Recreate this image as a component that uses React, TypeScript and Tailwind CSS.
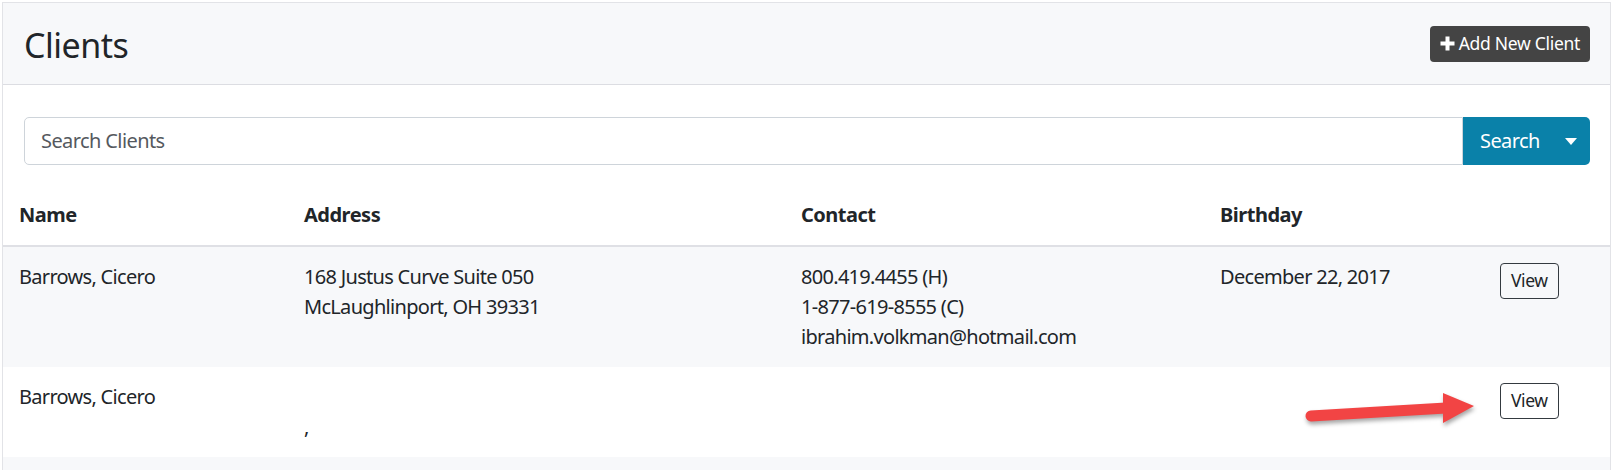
import React from "react";

type Client = {
  name: string;
  address: string[];
  contact: string[];
  birthday: string;
};

const clients: Client[] = [
  {
    name: "Barrows, Cicero",
    address: ["168 Justus Curve Suite 050", "McLaughlinport, OH 39331"],
    contact: ["800.419.4455 (H)", "1-877-619-8555 (C)", "ibrahim.volkman@hotmail.com"],
    birthday: "December 22, 2017",
  },
  {
    name: "Barrows, Cicero",
    address: ["", ","],
    contact: [],
    birthday: "",
  },
];

function PlusIcon() {
  return (
    <svg width="15" height="15" viewBox="0 0 15 15" className="shrink-0">
      <path d="M5.5 0.5h4v5h5v4h-5v5h-4v-5h-5v-4h5z" fill="#ffffff" />
    </svg>
  );
}

function Arrow() {
  return (
    <svg
      width="190"
      height="56"
      viewBox="0 0 190 56"
      className="absolute left-[1300px] top-[385px] pointer-events-none"
      style={{ filter: "drop-shadow(1px 3px 2px rgba(0,0,0,0.35))" }}
    >
      <line x1="11" y1="31" x2="146" y2="23" stroke="#f24444" strokeWidth="11" strokeLinecap="round" />
      <polygon points="143,8 174,21 143,38" fill="#f24444" />
    </svg>
  );
}

export default function App() {
  return (
    <div
      className="relative w-[1614px] h-[470px] overflow-hidden bg-white pl-[2px] pt-[2px] pr-[3px] text-[#212529]"
      style={{ fontFamily: "'Noto Sans', 'Open Sans', sans-serif" }}
    >
      <div className="border border-[#e2e3e7] bg-white h-[480px]">
        {/* Card header */}
        <div className="h-[82px] bg-[#f7f8fa] border-b border-[#dcdde2] flex items-center justify-between pl-[21px] pr-[20px]">
          <h2 className="text-[34px] leading-none font-normal tracking-[-0.5px] pt-[2px]">Clients</h2>
          <button className="h-[36px] px-[10px] rounded-[4px] bg-[#444444] text-white text-[17.5px] flex items-center gap-[4px]">
            <PlusIcon />
            <span className="tracking-[-0.3px]">Add New Client</span>
          </button>
        </div>

        {/* Search */}
        <div className="pt-[32px] pl-[21px] pr-[20px]">
          <div className="flex h-[48px]">
            <input
              className="flex-1 border border-[#ced4da] rounded-l-[5px] px-[16px] text-[20px] outline-none placeholder:text-[#55595e] tracking-[-0.6px]"
              placeholder="Search Clients"
            />
            <button className="w-[127px] bg-[#0a81a9] text-white rounded-r-[5px] flex items-center pl-[17px] pr-[13px] justify-between">
              <span className="text-[20px] tracking-[-0.6px]">Search</span>
              <svg width="12" height="7" viewBox="0 0 12 7">
                <path d="M0 0h12L6 7z" fill="#ffffff" />
              </svg>
            </button>
          </div>
        </div>

        {/* Table */}
        <table className="mt-[20px] w-full table-fixed border-collapse text-[20px] leading-[30px] tracking-[-0.7px]">
          <colgroup>
            <col className="w-[285px]" />
            <col className="w-[497px]" />
            <col className="w-[419px]" />
            <col className="w-[281px]" />
            <col />
          </colgroup>
          <thead>
            <tr className="border-b-2 border-[#dfe0e5]">
              <th className="text-left font-bold px-[16px] py-[15px] tracking-[-0.5px]">Name</th>
              <th className="text-left font-bold px-[16px] py-[15px] tracking-[-0.5px]">Address</th>
              <th className="text-left font-bold px-[16px] py-[15px] tracking-[-0.5px]">Contact</th>
              <th className="text-left font-bold px-[16px] py-[15px] tracking-[-0.5px]">Birthday</th>
              <th className="px-[16px] py-[15px]"></th>
            </tr>
          </thead>
          <tbody>
            {clients.map((c, i) => (
              <tr key={i} className={i % 2 === 0 ? "bg-[#f7f8fa]" : "bg-white"}>
                <td className="align-top px-[16px] py-[15px]">{c.name}</td>
                <td className="align-top px-[16px] py-[15px]">
                  {c.address.map((l, j) => (
                    <div key={j} className="h-[30px]">{l}</div>
                  ))}
                </td>
                <td className="align-top px-[16px] py-[15px]">
                  {c.contact.map((l, j) => (
                    <div key={j}>{l}</div>
                  ))}
                </td>
                <td className="align-top px-[16px] py-[15px]">{c.birthday}</td>
                <td className="align-top px-[15px] pt-[16px] pb-[15px]">
                  <button className="h-[36px] px-[10px] border border-[#343a40] rounded-[4px] text-[17.5px] leading-none text-[#212529] tracking-[-0.4px]">
                    View
                  </button>
                </td>
              </tr>
            ))}
            <tr className="bg-[#f7f8fa]">
              <td className="h-[60px]" colSpan={5}></td>
            </tr>
          </tbody>
        </table>
      </div>
      <Arrow />
    </div>
  );
}
